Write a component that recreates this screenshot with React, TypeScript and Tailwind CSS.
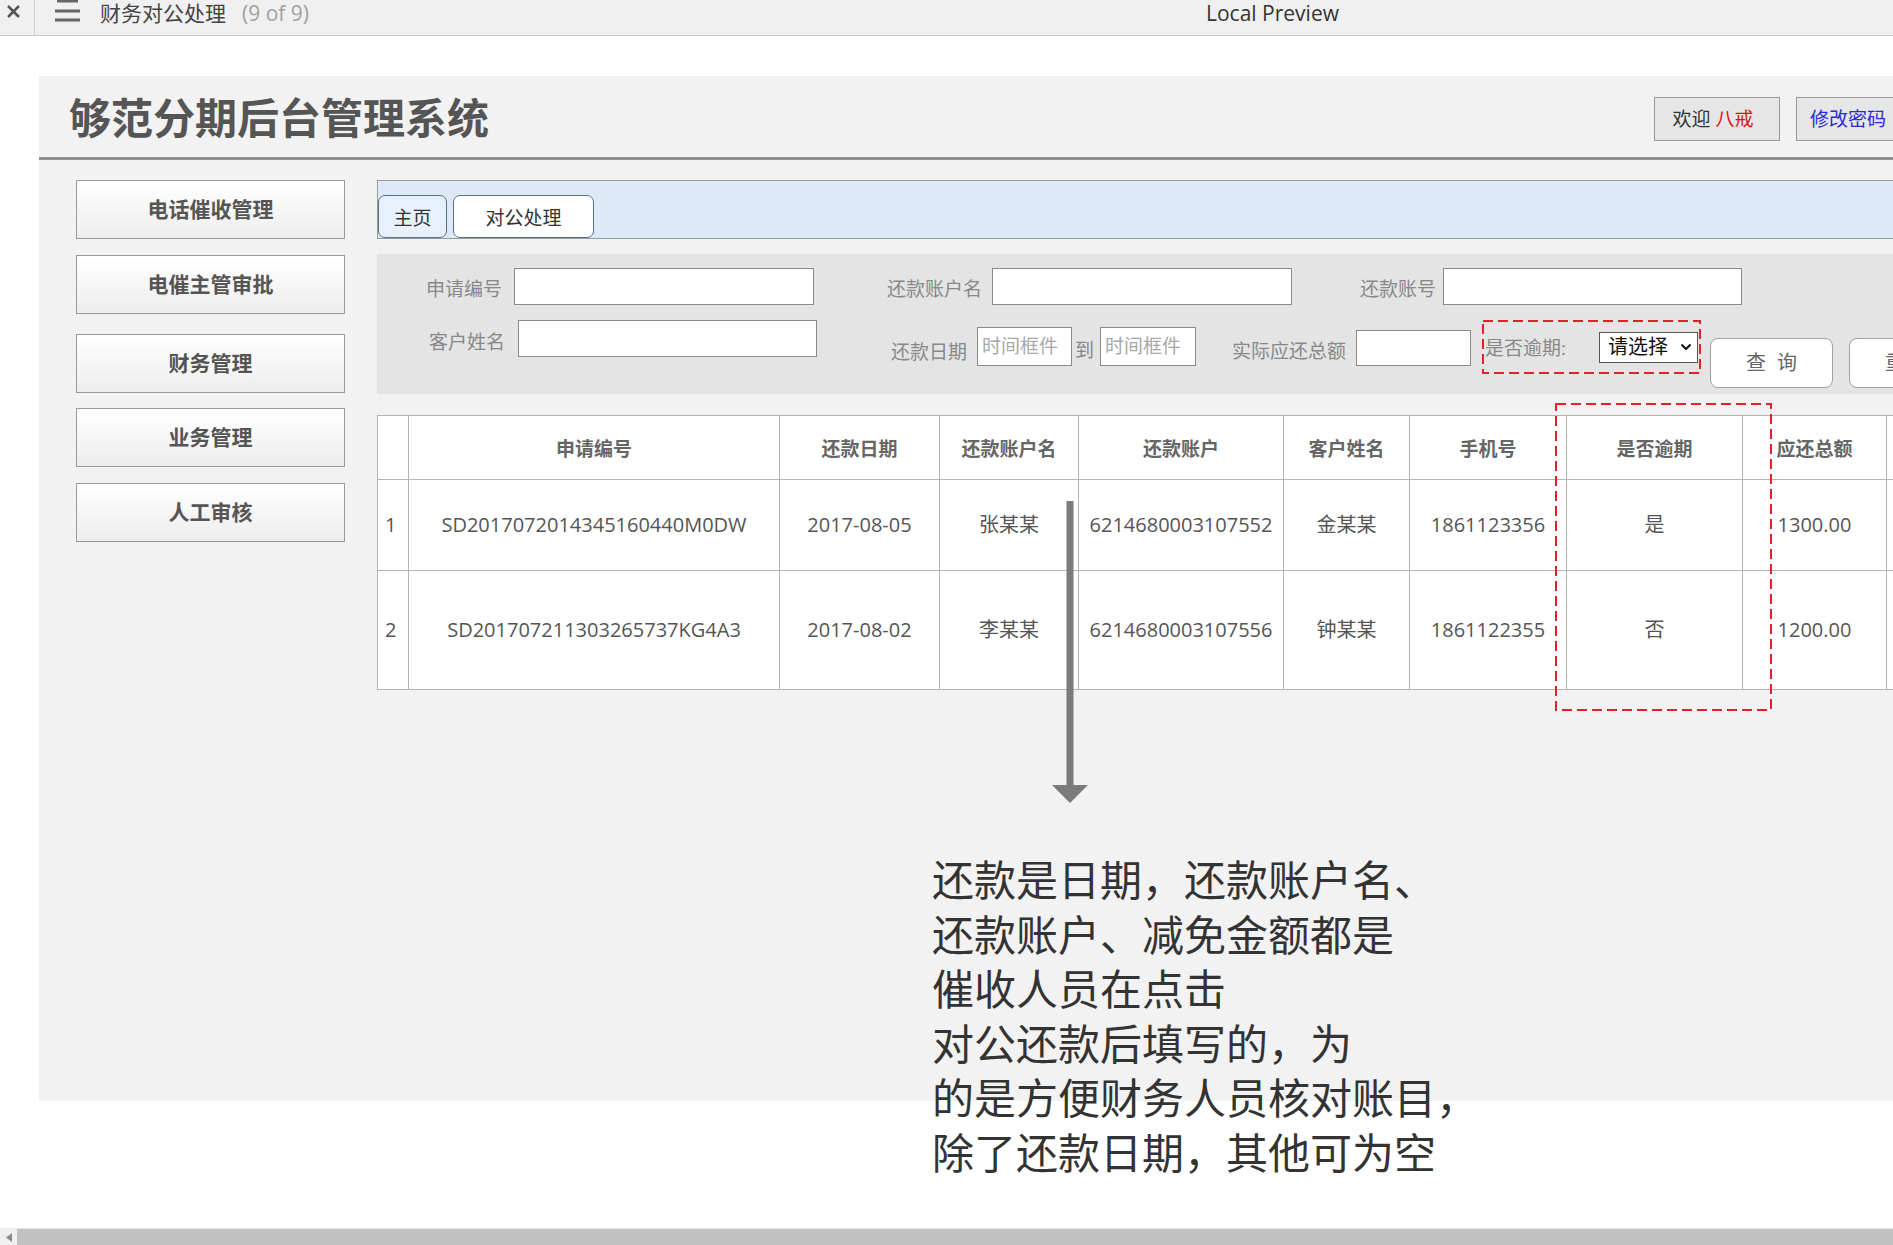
import React from "react";

const sideItems = [
  { label: "电话催收管理", mt: "mt-0" },
  { label: "电催主管审批", mt: "mt-[16px]" },
  { label: "财务管理", mt: "mt-[20px]" },
  { label: "业务管理", mt: "mt-[15px]" },
  { label: "人工审核", mt: "mt-[16px]" },
];

const columns = [
  { label: "", w: 31 },
  { label: "申请编号", w: 371 },
  { label: "还款日期", w: 160 },
  { label: "还款账户名", w: 139 },
  { label: "还款账户", w: 205 },
  { label: "客户姓名", w: 126 },
  { label: "手机号", w: 157 },
  { label: "是否逾期", w: 176 },
  { label: "应还总额", w: 144 },
  { label: "", w: 150 },
];

const rows = [
  {
    h: "h-[91px]",
    cells: ["1", "SD2017072014345160440M0DW", "2017-08-05", "张某某", "6214680003107552", "金某某", "1861123356", "是", "1300.00", ""],
  },
  {
    h: "h-[119px]",
    cells: ["2", "SD201707211303265737KG4A3", "2017-08-02", "李某某", "6214680003107556", "钟某某", "1861122355", "否", "1200.00", ""],
  },
];

const note = [
  "还款是日期，还款账户名、",
  "还款账户、减免金额都是",
  "催收人员在点击",
  "对公还款后填写的，为",
  "的是方便财务人员核对账目，",
  "除了还款日期，其他可为空",
];

// red dashed frame used for the annotation marks
function Dashes() {
  return (
    <svg className="pointer-events-none absolute inset-0 h-full w-full" preserveAspectRatio="none">
      <rect x="1" y="1" width="calc(100% - 2px)" height="calc(100% - 2px)" fill="none" stroke="#e3212b" strokeWidth="2" strokeDasharray="10 5" />
    </svg>
  );
}

function TopBar() {
  return (
    <div className="relative flex h-[36px] shrink-0 items-start border-b border-[#c8c8c8] bg-[#f0f0f0]">
      <svg width="13" height="13" viewBox="0 0 13 13" className="ml-[7px] mt-[5px]">
        <path d="M1 1 L12 12 M12 1 L1 12" stroke="#555" strokeWidth="2.5" />
      </svg>
      <div className="ml-[14px] h-[36px] w-px bg-[#cfcfcf]" />
      <svg width="25" height="22" viewBox="0 0 25 22" className="ml-[20px]">
        <rect x="2" y="0" width="21" height="2.5" fill="#666" />
        <rect x="0" y="9.5" width="25" height="3" fill="#666" />
        <rect x="0" y="18.5" width="25" height="3" fill="#666" />
      </svg>
      <span className="ml-[20px] mt-[1px] text-[21px] leading-[25px] text-[#444]">财务对公处理</span>
      <span className="ml-[16px] mt-[1px] text-[21px] leading-[25px] text-[#a0a0a0]">(9 of 9)</span>
      <span className="absolute left-[1206px] top-[1px] text-[21px] leading-[25px] text-[#333]">Local Preview</span>
    </div>
  );
}

function Field({ label, boxW, gap, inputW }: { label: string; boxW: string; gap: string; inputW: string }) {
  return (
    <>
      <span className={`${boxW} pt-[5px] text-right text-[19px] leading-[37px] text-[#888]`}>{label}</span>
      <div className={`${gap} ${inputW} h-[37px] border border-[#8a8a8a] bg-white`} />
    </>
  );
}

function SearchPanel() {
  return (
    <div className="mt-[15px] h-[140px] bg-[#e4e4e4] pt-[14px]">
      <div className="flex h-[37px] items-center">
        <Field label="申请编号" boxW="w-[125px]" gap="ml-[12px]" inputW="w-[300px]" />
        <Field label="还款账户名" boxW="w-[168px]" gap="ml-[10px]" inputW="w-[300px]" />
        <Field label="还款账号" boxW="w-[144px]" gap="ml-[7px]" inputW="w-[299px]" />
      </div>
      <div className="mt-[15px] flex items-start">
        <span className="mt-[4px] w-[128px] text-right text-[19px] leading-[37px] text-[#888]">客户姓名</span>
        <div className="ml-[13px] h-[37px] w-[299px] border border-[#8a8a8a] bg-white" />
        <span className="mt-[13px] w-[150px] text-right text-[19px] leading-[39px] text-[#888]">还款日期</span>
        <div className="ml-[10px] mt-[7px] flex h-[39px] w-[95px] items-center border border-[#8a8a8a] bg-white pl-[4px] text-[19px] text-[#a8a8a8]">
          时间框件
        </div>
        <span className="ml-[3px] mt-[11px] text-[19px] leading-[39px] text-[#888]">到</span>
        <div className="ml-[6px] mt-[7px] flex h-[39px] w-[96px] items-center border border-[#8a8a8a] bg-white pl-[4px] text-[19px] text-[#a8a8a8]">
          时间框件
        </div>
        <span className="mt-[12px] w-[150px] text-right text-[19px] leading-[38px] text-[#888]">实际应还总额</span>
        <div className="ml-[10px] mt-[10px] h-[36px] w-[115px] border border-[#8a8a8a] bg-white" />
        <div className="relative ml-[11px] flex h-[54px] w-[219px] items-center pl-[3px]">
          <Dashes />
          <span className="pt-[3px] text-[19px] text-[#888]">是否逾期:</span>
          <div className="ml-[33px] flex h-[31px] w-[99px] items-center justify-between border border-[#555] bg-white pl-[8px] pr-[5px] text-[20px] text-[#111]">
            <span>请选择</span>
            <svg width="12" height="8" viewBox="0 0 12 8">
              <path d="M1.5 1.5 L6 6 L10.5 1.5" fill="none" stroke="#111" strokeWidth="2" />
            </svg>
          </div>
        </div>
        <button className="ml-[9px] mt-[18px] h-[50px] w-[123px] rounded-[8px] border border-[#a0a0a0] bg-white pl-[3px] text-[20px] tracking-[3px] text-[#666]">
          查 询
        </button>
        <button className="ml-[16px] mt-[18px] h-[50px] w-[123px] rounded-[8px] border border-[#a0a0a0] bg-white pl-[3px] text-[20px] tracking-[3px] text-[#666]">
          重 置
        </button>
      </div>
    </div>
  );
}

function DataTable() {
  return (
    <table className="mt-[21px] table-fixed border-collapse bg-white" style={{ width: 1659 }}>
      <colgroup>
        {columns.map((c, i) => (
          <col key={i} style={{ width: c.w }} />
        ))}
      </colgroup>
      <thead>
        <tr className="h-[64px]">
          {columns.map((c, i) => (
            <th key={i} className="border border-[#b4b4b4] pt-[3px] text-center text-[19px] font-bold text-[#666]">
              {c.label}
            </th>
          ))}
        </tr>
      </thead>
      <tbody>
        {rows.map((r, ri) => (
          <tr key={ri} className={r.h}>
            {r.cells.map((v, i) => (
              <td
                key={i}
                className={`border border-[#b4b4b4] text-[20px] text-[#555] ${i === 0 ? "pl-[7px] text-left" : "text-center"}`}
              >
                {v}
              </td>
            ))}
          </tr>
        ))}
      </tbody>
    </table>
  );
}

export default function App() {
  return (
    <div className="relative flex h-[1245px] w-[1893px] flex-col overflow-hidden bg-white font-['Open_Sans','Noto_Sans_CJK_SC',sans-serif]">
      <TopBar />
      <div className="h-[40px] shrink-0" />

      {/* main panel */}
      <div className="ml-[39px] h-[1025px] w-[2100px] shrink-0 bg-[#f2f2f2]">
        <div className="flex h-[84px] items-start border-b-[3px] border-[#8f8f8f] pl-[30px]">
          <h1 className="mt-[14px] w-[1585px] text-[42px] font-bold leading-[56px] text-[#555]">够范分期后台管理系统</h1>
          <div className="mt-[21px] flex h-[44px] w-[126px] items-center justify-center border border-[#9a9a9a] bg-[#e6e6e6] pr-[8px] text-[19px] text-[#333]">
            欢迎&nbsp;<span className="text-[#e01010]">八戒</span>
          </div>
          <div className="ml-[16px] mt-[21px] flex h-[44px] w-[126px] items-center border border-[#9a9a9a] bg-[#e6e6e6] pl-[13px] text-[19px] text-[#2a2ad8]">
            修改密码
          </div>
        </div>

        <div className="flex pt-[20px]">
          <div className="ml-[37px] flex w-[269px] flex-col">
            {sideItems.map((s) => (
              <div
                key={s.label}
                className={`${s.mt} flex h-[59px] items-center justify-center border border-[#9a9a9a] bg-gradient-to-b from-white to-[#ededed] text-[21px] font-bold text-[#555]`}
              >
                {s.label}
              </div>
            ))}
          </div>

          <div className="ml-[32px] w-[1700px]">
            <div className="flex h-[59px] items-end border border-r-0 border-[#9a9a9a] bg-[#dde9f9]">
              <div className="flex h-[43px] w-[69px] items-center justify-center rounded-[7px] border border-[#55708e] bg-[#e7f0fb] pt-[3px] text-[19px] text-[#333]">
                主页
              </div>
              <div className="ml-[6px] flex h-[43px] w-[141px] items-center justify-center rounded-[7px] border border-[#55708e] bg-white pt-[3px] text-[19px] text-[#333]">
                对公处理
              </div>
            </div>
            <SearchPanel />
            <DataTable />
          </div>
        </div>
      </div>

      <div className="flex-1" />
      <div className="flex h-[17px] shrink-0 border-t border-[#e6e6e6] bg-[#c1c1c1]">
        <div className="flex w-[17px] items-center justify-center bg-[#f0f0f0]">
          <svg width="6" height="9" viewBox="0 0 6 9">
            <path d="M6 0 L0 4.5 L6 9 Z" fill="#8a8a8a" />
          </svg>
        </div>
      </div>

      {/* annotation overlays */}
      <div className="absolute left-[1555px] top-[403px] h-[308px] w-[217px]">
        <Dashes />
      </div>
      <svg className="absolute left-[1050px] top-[501px]" width="40" height="303" viewBox="0 0 40 303">
        <rect x="16.5" y="0" width="7" height="286" fill="#7b7b7b" />
        <polygon points="2,284 38,284 20,302" fill="#7b7b7b" />
      </svg>
      <div className="absolute left-[932px] top-[853px] text-[42px] leading-[54.5px] text-[#333]">
        {note.map((l) => (
          <div key={l}>{l}</div>
        ))}
      </div>
    </div>
  );
}
